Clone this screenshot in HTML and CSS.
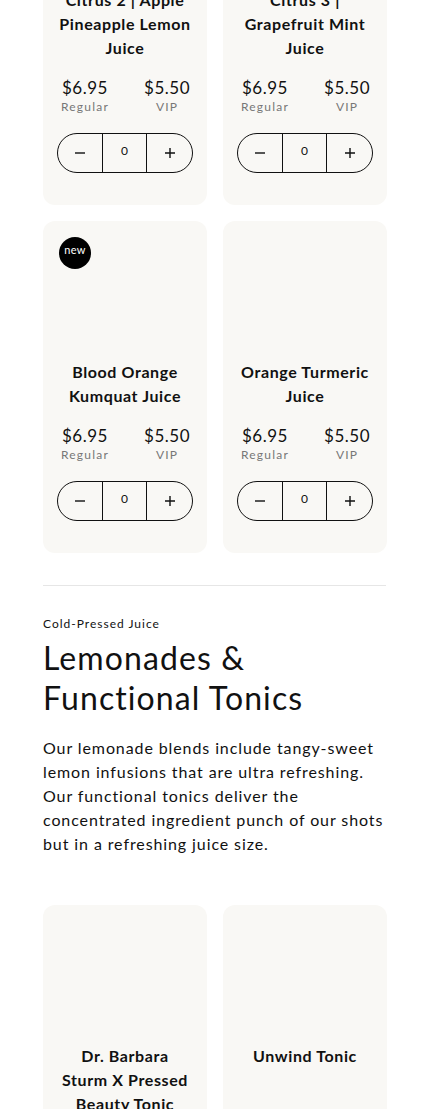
FILE: index.html
```html
<!DOCTYPE html>
<html lang="en">
<head>
    <meta charset="UTF-8">
    <meta name="viewport" content="width=device-width, initial-scale=1.0">
    <title>Cold-Pressed Juice</title>
    <link rel="stylesheet" href="styles.css">
</head>
<body>
    <div class="container">
        <div class="product-grid first-grid">
            <div class="card">
                <div class="media"></div>
                <div class="card-title">Citrus 2 | Apple Pineapple Lemon Juice</div>
                <div class="prices">
                    <div class="price"><span class="amount">$6.95</span><span class="tier">Regular</span></div>
                    <div class="price"><span class="amount">$5.50</span><span class="tier">VIP</span></div>
                </div>
                <div class="stepper">
                    <button class="step-btn" aria-label="Decrease">
                        <svg width="12" height="12" viewBox="0 0 12 12"><path d="M1 6h10" stroke="#111" stroke-width="1.4"/></svg>
                    </button>
                    <span class="qty">0</span>
                    <button class="step-btn" aria-label="Increase">
                        <svg width="12" height="12" viewBox="0 0 12 12"><path d="M1 6h10M6 1v10" stroke="#111" stroke-width="1.4"/></svg>
                    </button>
                </div>
            </div>
            <div class="card">
                <div class="media"></div>
                <div class="card-title">Citrus 3 | Grapefruit Mint Juice</div>
                <div class="prices">
                    <div class="price"><span class="amount">$6.95</span><span class="tier">Regular</span></div>
                    <div class="price"><span class="amount">$5.50</span><span class="tier">VIP</span></div>
                </div>
                <div class="stepper">
                    <button class="step-btn" aria-label="Decrease">
                        <svg width="12" height="12" viewBox="0 0 12 12"><path d="M1 6h10" stroke="#111" stroke-width="1.4"/></svg>
                    </button>
                    <span class="qty">0</span>
                    <button class="step-btn" aria-label="Increase">
                        <svg width="12" height="12" viewBox="0 0 12 12"><path d="M1 6h10M6 1v10" stroke="#111" stroke-width="1.4"/></svg>
                    </button>
                </div>
            </div>
            <div class="card">
                <div class="media"><span class="badge">new</span></div>
                <div class="card-title">Blood Orange Kumquat Juice</div>
                <div class="prices">
                    <div class="price"><span class="amount">$6.95</span><span class="tier">Regular</span></div>
                    <div class="price"><span class="amount">$5.50</span><span class="tier">VIP</span></div>
                </div>
                <div class="stepper">
                    <button class="step-btn" aria-label="Decrease">
                        <svg width="12" height="12" viewBox="0 0 12 12"><path d="M1 6h10" stroke="#111" stroke-width="1.4"/></svg>
                    </button>
                    <span class="qty">0</span>
                    <button class="step-btn" aria-label="Increase">
                        <svg width="12" height="12" viewBox="0 0 12 12"><path d="M1 6h10M6 1v10" stroke="#111" stroke-width="1.4"/></svg>
                    </button>
                </div>
            </div>
            <div class="card">
                <div class="media"></div>
                <div class="card-title">Orange Turmeric Juice</div>
                <div class="prices">
                    <div class="price"><span class="amount">$6.95</span><span class="tier">Regular</span></div>
                    <div class="price"><span class="amount">$5.50</span><span class="tier">VIP</span></div>
                </div>
                <div class="stepper">
                    <button class="step-btn" aria-label="Decrease">
                        <svg width="12" height="12" viewBox="0 0 12 12"><path d="M1 6h10" stroke="#111" stroke-width="1.4"/></svg>
                    </button>
                    <span class="qty">0</span>
                    <button class="step-btn" aria-label="Increase">
                        <svg width="12" height="12" viewBox="0 0 12 12"><path d="M1 6h10M6 1v10" stroke="#111" stroke-width="1.4"/></svg>
                    </button>
                </div>
            </div>
        </div>

        <hr class="divider">

        <section class="section-intro">
            <div class="eyebrow">Cold-Pressed Juice</div>
            <h2 class="section-title">Lemonades &amp; Functional Tonics</h2>
            <p class="section-text">Our lemonade blends include tangy-sweet lemon infusions that are ultra refreshing. Our functional tonics deliver the concentrated ingredient punch of our shots but in a refreshing juice size.</p>
        </section>

        <div class="product-grid">
            <div class="card">
                <div class="media"></div>
                <div class="card-title">Dr. Barbara Sturm X Pressed Beauty Tonic</div>
                <div class="prices">
                    <div class="price"><span class="amount">$7.95</span><span class="tier">Regular</span></div>
                    <div class="price"><span class="amount">$6.50</span><span class="tier">VIP</span></div>
                </div>
                <div class="stepper">
                    <button class="step-btn" aria-label="Decrease">
                        <svg width="12" height="12" viewBox="0 0 12 12"><path d="M1 6h10" stroke="#111" stroke-width="1.4"/></svg>
                    </button>
                    <span class="qty">0</span>
                    <button class="step-btn" aria-label="Increase">
                        <svg width="12" height="12" viewBox="0 0 12 12"><path d="M1 6h10M6 1v10" stroke="#111" stroke-width="1.4"/></svg>
                    </button>
                </div>
            </div>
            <div class="card">
                <div class="media"></div>
                <div class="card-title">Unwind Tonic</div>
                <div class="prices">
                    <div class="price"><span class="amount">$6.95</span><span class="tier">Regular</span></div>
                    <div class="price"><span class="amount">$5.50</span><span class="tier">VIP</span></div>
                </div>
                <div class="stepper">
                    <button class="step-btn" aria-label="Decrease">
                        <svg width="12" height="12" viewBox="0 0 12 12"><path d="M1 6h10" stroke="#111" stroke-width="1.4"/></svg>
                    </button>
                    <span class="qty">0</span>
                    <button class="step-btn" aria-label="Increase">
                        <svg width="12" height="12" viewBox="0 0 12 12"><path d="M1 6h10M6 1v10" stroke="#111" stroke-width="1.4"/></svg>
                    </button>
                </div>
            </div>
        </div>
    </div>
</body>
</html>
```

FILE: styles.css
```css
* {
    margin: 0;
    padding: 0;
    box-sizing: border-box;
}

body {
    font-family: Lato, 'Liberation Sans', sans-serif;
    background: #ffffff;
    color: #111111;
    overflow: hidden;
}

.container {
    width: 343px;
    margin-left: 43px;
}

.product-grid {
    display: grid;
    grid-template-columns: 1fr 1fr;
    gap: 16px;
}

/* page is scrolled part-way through the first section */
.first-grid {
    margin-top: -151px;
}

.card {
    background: #f9f8f5;
    border-radius: 12px;
    padding: 16px 14px 32px;
    display: flex;
    flex-direction: column;
    align-items: center;
}

.media {
    width: 100%;
    height: 123px;
    padding-left: 2px;
}

.badge {
    display: flex;
    justify-content: center;
    padding-top: 6px;
    width: 32px;
    height: 32px;
    border-radius: 50%;
    background: #000000;
    color: #ffffff;
    font-size: 11px;
    line-height: 14px;
    letter-spacing: 0.4px;
}

.card-title {
    flex: 1;
    font-size: 16px;
    line-height: 24px;
    font-weight: 700;
    text-align: center;
    letter-spacing: 0.6px;
}

.prices {
    width: 100%;
    display: flex;
    justify-content: space-between;
    padding: 0 3px 0 4px;
    margin-top: 17px;
}

.price {
    display: flex;
    flex-direction: column;
    align-items: center;
}

.amount {
    font-size: 17px;
    line-height: 22px;
    letter-spacing: 0.5px;
}

.tier {
    font-size: 12px;
    line-height: 16px;
    color: #777777;
    letter-spacing: 1.2px;
}

.stepper {
    margin-top: 18px;
    width: 136px;
    height: 40px;
    flex-shrink: 0;
    display: grid;
    grid-template-columns: 44px 1fr 45px;
    border: 1px solid #111111;
    border-radius: 20px;
    align-self: center;
}

.step-btn {
    background: none;
    border: none;
    display: flex;
    align-items: center;
    justify-content: center;
    cursor: pointer;
}

.qty {
    border-left: 1px solid #111111;
    border-right: 1px solid #111111;
    display: flex;
    justify-content: center;
    padding-top: 9px;
    font-size: 12px;
    line-height: 16px;
}

.divider {
    border: none;
    border-top: 1px solid #e6e6e6;
    margin-top: 32px;
}

.section-intro {
    padding-top: 30px;
    padding-bottom: 49px;
}

.eyebrow {
    font-size: 12px;
    line-height: 16px;
    letter-spacing: 1px;
}

.section-title {
    font-size: 32px;
    line-height: 40px;
    font-weight: 400;
    margin-top: 6px;
    letter-spacing: 1.1px;
}

.section-text {
    font-size: 16px;
    line-height: 24px;
    margin-top: 18px;
    letter-spacing: 0.9px;
}
```
